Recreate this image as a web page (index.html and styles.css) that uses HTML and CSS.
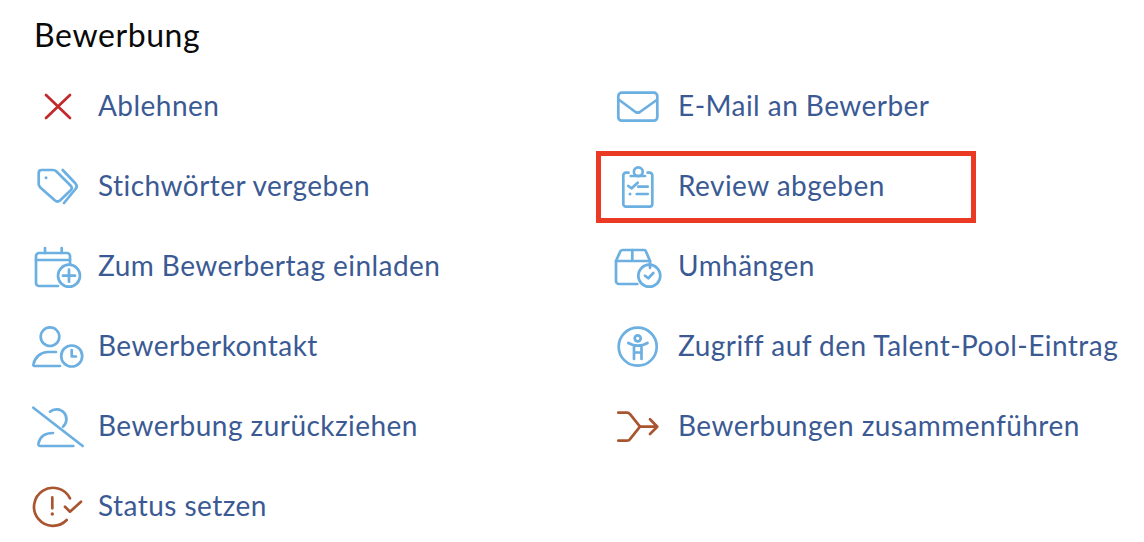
FILE: index.html
```html
<!DOCTYPE html>
<html lang="de">
<head>
<meta charset="utf-8">
<title>Bewerbung</title>
<link rel="stylesheet" href="styles.css">
</head>
<body>
<h1 class="title">Bewerbung</h1>
<ul class="actions">
  <li class="action">
    <svg class="icon red" viewBox="0 0 48 48"><path d="M12 13 36 36M36 13 12 36"/></svg>
    <span>Ablehnen</span>
  </li>
  <li class="action">
    <svg class="icon blue" viewBox="0 0 48 48"><rect x="4.300" y="10.700" width="39" height="28" rx="3.500"/><path d="M5.300 18 21.500 30a4 4 0 0 0 4.400 0L42.700 18"/></svg>
    <span>E-Mail an Bewerber</span>
  </li>
  <li class="action">
    <svg class="icon blue" viewBox="0 0 48 48"><path d="M7.500 8H19q2 0 3.500 1.500L37 24q1.700 2 0 4L26 38.500q-2.500 2-5 0L6.300 25.500Q4.700 24 4.700 22V11q0-3 2.800-3Z"/><circle class="fill" cx="12" cy="15.700" r="1.500"/><path d="M28.700 8 41.500 21.500q2.500 3 0 5.500L30 41"/></svg>
    <span>Stichwörter vergeben</span>
  </li>
  <li class="action">
    <svg class="icon blue" viewBox="0 0 48 48"><path d="M14.500 10.700H12a2.700 2.700 0 0 0-2.700 2.700V42a2.700 2.700 0 0 0 2.700 2.700h23.600a2.700 2.700 0 0 0 2.700-2.700V13.400a2.700 2.700 0 0 0-2.700-2.700h-2"/><circle cx="24.300" cy="9.800" r="4.400"/><path d="M16.700 14H31"/><path d="M14.300 24 17.700 26.300 23.700 20.700M24.300 24.700h9.400M22.700 32h11"/><circle class="fill" cx="16" cy="32" r="1.500"/></svg>
    <span>Review abgeben</span>
    <div class="highlight"></div>
  </li>
  <li class="action">
    <svg class="icon blue" viewBox="0 0 48 48"><path d="M36 22v-8a3 3 0 0 0-3-3H5a3 3 0 0 0-3 3v27a3 3 0 0 0 3 3h19"/><path d="M2 18h34M11 6v5M27.700 6v5"/><circle cx="35" cy="33.700" r="11"/><path d="M35 27.700v12M29 33.700h12"/></svg>
    <span>Zum Bewerbertag einladen</span>
  </li>
  <li class="action">
    <svg class="icon blue" viewBox="0 0 48 48"><path d="M23.300 42H5a3 3 0 0 1-3-3V19L6 10q.8-2 3-2h21q1.500 0 2 1.500L36 19v7"/><path d="M2 19h34M18.300 8v11"/><circle cx="35.300" cy="33.700" r="11"/><path d="M31 33.700 34.300 36.300 39.300 31"/></svg>
    <span>Umhängen</span>
  </li>
  <li class="action">
    <svg class="icon blue" viewBox="0 0 48 48"><circle cx="16" cy="14.700" r="9.300"/><path d="M26 44H.5Q-1 44-.5 42C1 35 7 30 14 30h8"/><circle cx="37.700" cy="34" r="10.500"/><path d="M37.700 28v6.500H42"/></svg>
    <span>Bewerberkontakt</span>
  </li>
  <li class="action">
    <svg class="icon blue" viewBox="0 0 48 48"><circle cx="23.700" cy="24.700" r="19"/><circle cx="23.700" cy="16.300" r="3"/><path d="M14.300 21c3.700 2 6.700 2.700 9.400 2.700 2.800 0 6.300-.7 9.800-2.700M20 24v13M27.500 24v13M20 30.500h7.500"/></svg>
    <span>Zugriff auf den Talent-Pool-Eintrag</span>
  </li>
  <li class="action">
    <svg class="icon blue" viewBox="0 0 48 48"><path d="M-.7 5.700 48.700 44"/><path d="M16 9.700A9.600 9.600 0 0 1 29 24.700"/><path d="M39.300 44H6Q4 44 4.500 41C6 35 11 31 19 31"/></svg>
    <span>Bewerbung zurückziehen</span>
  </li>
  <li class="action">
    <svg class="icon brown" viewBox="0 0 48 48"><path d="M4.300 10.700H13q2 0 3 1.500L26 24.700 16 37.200q-1 1.500-3 1.500H4.300"/><path d="M26 24.700h17.300M36 17.300l7.300 7.400L36 32"/></svg>
    <span>Bewerbungen zusammenführen</span>
  </li>
  <li class="action">
    <svg class="icon brown" viewBox="0 0 48 48"><path d="M36 16.300A19 19 0 1 0 32.700 38"/><path d="M18.300 15.300v11M31 24.700l5 5 11-10"/><circle class="fill" cx="18.300" cy="32" r="1.700"/></svg>
    <span>Status setzen</span>
  </li>
</ul>
</body>
</html>
```
FILE: styles.css
```css
* { box-sizing: border-box; }
html, body { margin: 0; padding: 0; }
body {
  width: 1144px;
  height: 542px;
  overflow: hidden;
  background: #fff;
  padding: 15px 0 0 34px;
  font-family: "Lato", "Open Sans", sans-serif;
}
.title {
  margin: 0;
  height: 40px;
  line-height: 40px;
  font-size: 32px;
  font-weight: 400;
  letter-spacing: 0.6px;
  color: #0a0a0a;
}
.actions {
  list-style: none;
  margin: 11px 0 0;
  padding: 0;
  display: grid;
  grid-template-columns: 580px 530px;
  grid-auto-rows: 80px;
}
.action {
  position: relative;
  display: flex;
  align-items: center;
  gap: 16px;
  font-size: 28px;
  letter-spacing: 0.46px;
  color: #3b5a94;
}
.action span { position: relative; top: -1px; }
.icon {
  flex: none;
  width: 48px;
  height: 48px;
  overflow: visible;
  fill: none;
  stroke-width: 2.700;
  stroke-linecap: round;
  stroke-linejoin: round;
}
.blue { stroke: #6cafe1; }
.red { stroke: #c2292a; }
.brown { stroke: #a9552f; }
.icon .fill { stroke: none; }
.blue .fill { fill: #6cafe1; }
.brown .fill { fill: #a9552f; }
.highlight {
  position: absolute;
  left: -18px;
  top: 5px;
  width: 380px;
  height: 72px;
  border: 5px solid #ea3a24;
}
```
